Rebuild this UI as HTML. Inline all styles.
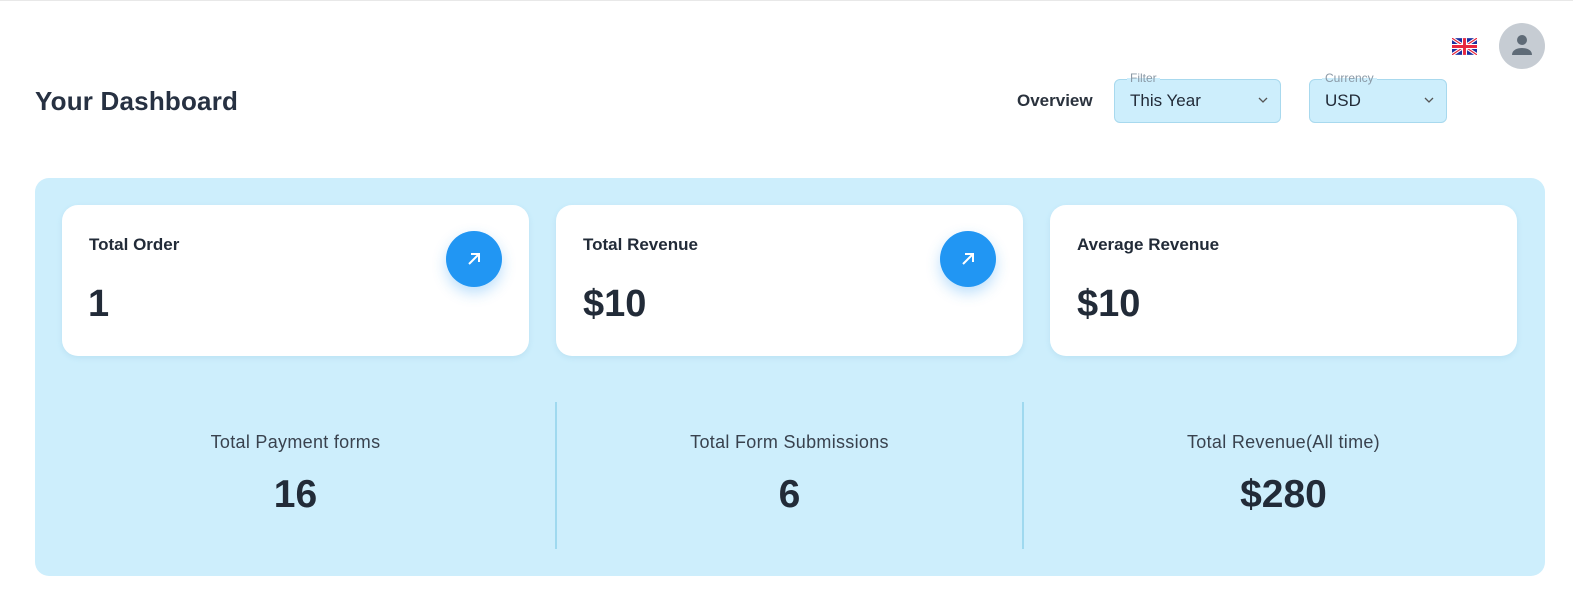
<!DOCTYPE html>
<html><head><style>
*{box-sizing:border-box;margin:0;padding:0}
html,body{overflow:hidden}
body{width:1573px;height:604px;background:#fff;font-family:"Liberation Sans",sans-serif;color:#222b38;position:relative;border-top:1px solid #e8e8e8}
.a{position:absolute}
.sel{position:absolute;top:78px;height:44px;background:#cdeefc;border:1px solid #a8d9ee;border-radius:6px;font-size:17px;padding:11px 0 0 15px;color:#222b38}
.sel .lb{position:absolute;top:-9px;left:12px;font-size:12px;color:#8a99a6;background:linear-gradient(#fff 50%,#cdeefc 50%);padding:0 3px}
.sel svg{position:absolute;right:12px;top:17px}
.panel{left:35px;top:177px;width:1510px;height:398px;background:#cdeefc;border-radius:14px}
.card{position:absolute;top:204px;width:467px;height:151px;background:#fff;border-radius:16px;box-shadow:0 2px 6px rgba(120,180,210,.2)}
.card .t{position:absolute;left:27px;top:30px;font-size:17px;font-weight:bold}
.card .v{position:absolute;left:27px;top:78px;font-size:38px;font-weight:bold}
.btn{position:absolute;left:384px;top:26px;width:56px;height:56px;border-radius:50%;background:#2196f3;box-shadow:0 6px 14px rgba(33,150,243,.3)}
.btn svg{position:absolute;left:19px;top:19px}
.st{position:absolute;top:431px;width:467px;text-align:center}
.st .l{font-size:18px;color:#39424e;letter-spacing:.3px}
.st .n{font-size:39px;font-weight:bold;margin-top:20px}
.div{position:absolute;top:401px;width:2px;height:147px;background:#9fd9ef}
</style></head><body>
<div class="a" style="left:35px;top:85px;font-size:26px;font-weight:bold;color:#273142;letter-spacing:.2px">Your Dashboard</div>
<svg class="a" style="left:1452px;top:37px" width="25" height="17" viewBox="0 0 60 40"><rect width="60" height="40" fill="#1a2fa0"/><path d="M0 0L60 40M60 0L0 40" stroke="#fff" stroke-width="8"/><path d="M0 0L60 40M60 0L0 40" stroke="#e8263e" stroke-width="3"/><path d="M30 0V40M0 20H60" stroke="#fff" stroke-width="12"/><path d="M30 0V40M0 20H60" stroke="#e8263e" stroke-width="7"/></svg>
<div class="a" style="left:1499px;top:22px;width:46px;height:46px;border-radius:50%;background:#c6ccd3">
<svg style="position:absolute;left:11px;top:10px" width="24" height="24" viewBox="0 0 24 24"><circle cx="12" cy="7" r="5" fill="#5f6b77"/><path d="M2 22c0-5 5-7 10-7s10 2 10 7z" fill="#5f6b77"/></svg></div>
<div class="a" style="left:1017px;top:90px;font-size:17px;font-weight:bold;color:#2a323d">Overview</div>
<div class="sel" style="left:1114px;width:167px"><span class="lb">Filter</span>This Year<svg width="10" height="6" viewBox="0 0 10 6"><path d="M1 1l4 4 4-4" stroke="#555" fill="none" stroke-width="1.3"/></svg></div>
<div class="sel" style="left:1309px;width:138px"><span class="lb">Currency</span>USD<svg width="10" height="6" viewBox="0 0 10 6"><path d="M1 1l4 4 4-4" stroke="#555" fill="none" stroke-width="1.3"/></svg></div>
<div class="a panel"></div>
<div class="card" style="left:62px"><div class="t">Total Order</div><div class="v" style="left:26px">1</div><div class="btn"><svg width="18" height="18" viewBox="0 0 18 18"><path d="M4 14L14 4M6 4h8v8" stroke="#fff" stroke-width="2" fill="none"/></svg></div></div>
<div class="card" style="left:556px"><div class="t">Total Revenue</div><div class="v">$10</div><div class="btn"><svg width="18" height="18" viewBox="0 0 18 18"><path d="M4 14L14 4M6 4h8v8" stroke="#fff" stroke-width="2" fill="none"/></svg></div></div>
<div class="card" style="left:1050px"><div class="t">Average Revenue</div><div class="v">$10</div></div>
<div class="st" style="left:62px"><div class="l">Total Payment forms</div><div class="n">16</div></div>
<div class="st" style="left:556px"><div class="l">Total Form Submissions</div><div class="n">6</div></div>
<div class="st" style="left:1050px"><div class="l">Total Revenue(All time)</div><div class="n">$280</div></div>
<div class="div" style="left:555px"></div>
<div class="div" style="left:1022px"></div>
</body></html>
